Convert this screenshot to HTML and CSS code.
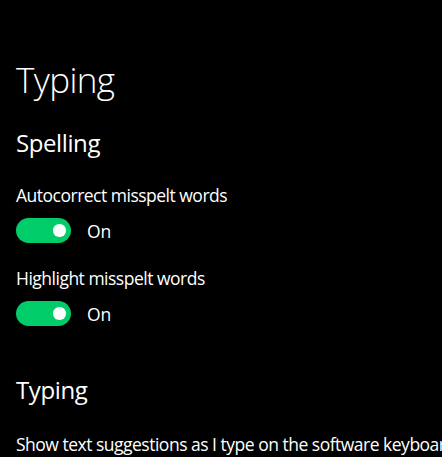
FILE: index.html
```html
<!DOCTYPE html>
<html lang="en">
<head>
<meta charset="utf-8">
<title>Typing</title>
<link rel="stylesheet" href="styles.css">
</head>
<body>
<main class="page">
  <h1 class="title">Typing</h1>
  <h2 class="subtitle first">Spelling</h2>
  <div class="setting">
    <p class="label">Autocorrect misspelt words</p>
    <div class="toggle-row">
      <span class="toggle"><span class="knob"></span></span>
      <span class="state">On</span>
    </div>
  </div>
  <div class="setting">
    <p class="label">Highlight misspelt words</p>
    <div class="toggle-row">
      <span class="toggle"><span class="knob"></span></span>
      <span class="state">On</span>
    </div>
  </div>
  <h2 class="subtitle second">Typing</h2>
  <p class="label last">Show text suggestions as I type on the software keyboard</p>
</main>
</body>
</html>
```

FILE: styles.css
```css
html, body {
  margin: 0;
  padding: 0;
  background: #000;
  overflow: hidden;
}
body {
  width: 442px;
  height: 457px;
  font-family: "Open Sans", "Noto Sans", sans-serif;
  color: #fff;
}
.page {
  padding: 56px 0 0 16px;
}
.title {
  margin: 0;
  font-size: 35px;
  font-weight: 300;
  line-height: 48px;
  letter-spacing: -0.6px;
}
.subtitle {
  margin: 0;
  font-size: 24px;
  font-weight: 400;
  line-height: 32px;
  letter-spacing: -0.4px;
}
.subtitle.first {
  margin-top: 23px;
}
.subtitle.second {
  margin-top: 48px;
}
.setting {
  margin-top: 24px;
}
.setting + .setting {
  margin-top: 23px;
}
.label {
  margin: 0;
  font-size: 17.5px;
  line-height: 24px;
  white-space: nowrap;
  letter-spacing: -0.5px;
}
.label.last {
  margin-top: 26px;
}
.toggle-row {
  margin-top: 11px;
  display: flex;
  align-items: center;
  gap: 16px;
  height: 25px;
}
.toggle {
  width: 55px;
  height: 25px;
  border-radius: 12.5px;
  background: #00cc6a;
  display: flex;
  align-items: center;
  justify-content: flex-end;
  padding-right: 5.5px;
  box-sizing: border-box;
}
.knob {
  width: 12.5px;
  height: 12.5px;
  border-radius: 50%;
  background: #fff;
}
.state {
  font-size: 17.5px;
  line-height: 24px;
}
```
